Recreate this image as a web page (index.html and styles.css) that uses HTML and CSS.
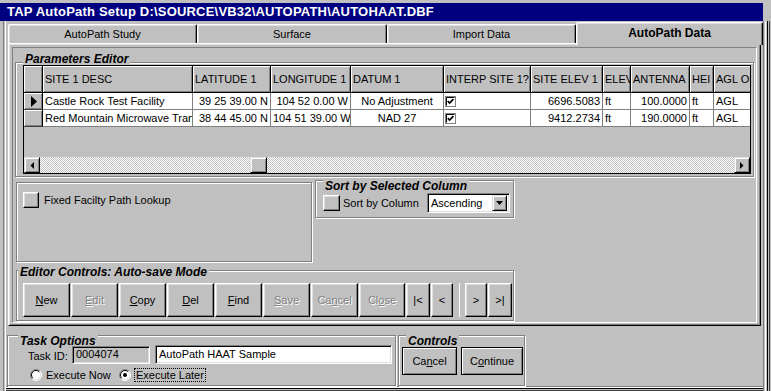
FILE: index.html
```html
<!DOCTYPE html>
<html>
<head>
<meta charset="utf-8">
<title>TAP AutoPath Setup</title>
<link rel="stylesheet" href="styles.css">
</head>
<body>
<div class="win">
  <div class="title">TAP AutoPath Setup D:\SOURCE\VB32\AUTOPATH\AUTOHAAT.DBF</div>
  <div class="client">
    <div class="tabs">
      <div class="tab t1">AutoPath Study</div>
      <div class="tab t2">Surface</div>
      <div class="tab t3">Import Data</div>
      <div class="tab sel">AutoPath Data</div>
    </div>
    <div class="panel">
      <div class="panel-in">
        <div class="group g-params">
          <div class="legend lg-params">Parameters Editor</div>
          <div class="grid">
            <div class="row head">
              <div class="c s"></div>
              <div class="c">SITE 1 DESC</div>
              <div class="c">LATITUDE 1</div>
              <div class="c">LONGITUDE 1</div>
              <div class="c">DATUM 1</div>
              <div class="c">INTERP SITE 1?</div>
              <div class="c">SITE ELEV 1</div>
              <div class="c">ELEV</div>
              <div class="c">ANTENNA</div>
              <div class="c">HEI</div>
              <div class="c">AGL OF</div>
            </div>
            <div class="row data">
              <div class="c s"><svg width="6" height="11" viewBox="0 0 6 11"><path d="M0 0L6 5.5L0 11Z" fill="#000"/></svg></div>
              <div class="c">Castle Rock Test Facility</div>
              <div class="c r">39 25 39.00 N</div>
              <div class="c r">104 52 0.00 W</div>
              <div class="c ctr">No Adjustment</div>
              <div class="c ck"><svg width="11" height="11" viewBox="0 0 11 11"><rect x="0.5" y="0.5" width="10" height="10" fill="#fff" stroke="#808080"/><path d="M1.5 9.5V1.5H9.5" fill="none" stroke="#000"/><path d="M2.8 5.2L4.6 7L8.4 3.2" fill="none" stroke="#000" stroke-width="1.7"/></svg></div>
              <div class="c r">6696.5083</div>
              <div class="c">ft</div>
              <div class="c r">100.0000</div>
              <div class="c">ft</div>
              <div class="c">AGL</div>
            </div>
            <div class="row data">
              <div class="c s"></div>
              <div class="c">Red Mountain Microwave Tran</div>
              <div class="c r">38 44 45.00 N</div>
              <div class="c r">104 51 39.00 W</div>
              <div class="c ctr">NAD 27</div>
              <div class="c ck"><svg width="11" height="11" viewBox="0 0 11 11"><rect x="0.5" y="0.5" width="10" height="10" fill="#fff" stroke="#808080"/><path d="M1.5 9.5V1.5H9.5" fill="none" stroke="#000"/><path d="M2.8 5.2L4.6 7L8.4 3.2" fill="none" stroke="#000" stroke-width="1.7"/></svg></div>
              <div class="c r">9412.2734</div>
              <div class="c">ft</div>
              <div class="c r">190.0000</div>
              <div class="c">ft</div>
              <div class="c">AGL</div>
            </div>
            <div class="empty"></div>
            <div class="hscroll">
              <div class="sbtn"><svg width="4" height="7" viewBox="0 0 4 7"><path d="M4 0V7L0.5 3.5Z" fill="#000"/></svg></div>
              <div class="track"><div class="thumb"></div></div>
              <div class="sbtn"><svg width="4" height="7" viewBox="0 0 4 7"><path d="M0 0V7L3.5 3.5Z" fill="#000"/></svg></div>
            </div>
          </div>
        </div>
        <div class="lower">
          <div class="group g-fixed">
            <div class="chkrow"><span class="sqbtn"></span><span>Fixed Facilty Path Lookup</span></div>
          </div>
          <div class="group g-sort">
            <div class="legend lg-sort">Sort by Selected Column</div>
            <div class="sortrow">
              <span class="sqbtn wide"></span>
              <span class="sortlbl">Sort by Column</span>
              <div class="combo">
                <span class="ctext">Ascending</span>
                <span class="dd"><svg width="7" height="4" viewBox="0 0 7 4"><path d="M0 0H7L3.5 4Z" fill="#000"/></svg></span>
              </div>
            </div>
          </div>
          <div class="group g-editor">
            <div class="legend lg-editor">Editor Controls: Auto-save Mode</div>
            <div class="btnrow">
              <div class="btn w47"><u>N</u>ew</div>
              <div class="btn w47 dis"><u>E</u>dit</div>
              <div class="btn w47"><u>C</u>opy</div>
              <div class="btn w47"><u>D</u>el</div>
              <div class="btn w47"><u>F</u>ind</div>
              <div class="btn w47 dis"><u>S</u>ave</div>
              <div class="btn w47 dis">Ca<u>n</u>cel</div>
              <div class="btn w46 dis">Cl<u>o</u>se</div>
              <div class="btn w24">|&lt;</div>
              <div class="btn w22">&lt;</div>
              <div class="blank"></div>
              <div class="btn w22">&gt;</div>
              <div class="btn w24">&gt;|</div>
            </div>
          </div>
        </div>
      </div>
    </div>
    <div class="bottom">
      <div class="group g-task">
        <div class="legend lg-task">Task Options</div>
        <div class="taskrow">
          <span class="tlabel">Task ID:</span>
          <div class="field f-id">0004074</div>
          <div class="field f-name">AutoPath HAAT Sample</div>
        </div>
        <div class="radiorow">
          <svg class="radio" width="12" height="12" viewBox="0 0 12 12"><circle cx="6" cy="6" r="5" fill="#fff"/><path d="M2.1 9.9A5.5 5.5 0 0 1 9.9 2.1" fill="none" stroke="#808080"/><path d="M9.9 2.1A5.5 5.5 0 0 1 2.1 9.9" fill="none" stroke="#fff"/><path d="M2.8 9.2A4.5 4.5 0 0 1 9.2 2.8" fill="none" stroke="#000"/><path d="M9.2 2.8A4.5 4.5 0 0 1 2.8 9.2" fill="none" stroke="#dfdfdf"/></svg>
          <span class="rlbl1">Execute Now</span>
          <svg class="radio" width="12" height="12" viewBox="0 0 12 12"><circle cx="6" cy="6" r="5" fill="#fff"/><path d="M2.1 9.9A5.5 5.5 0 0 1 9.9 2.1" fill="none" stroke="#808080"/><path d="M9.9 2.1A5.5 5.5 0 0 1 2.1 9.9" fill="none" stroke="#fff"/><path d="M2.8 9.2A4.5 4.5 0 0 1 9.2 2.8" fill="none" stroke="#000"/><path d="M9.2 2.8A4.5 4.5 0 0 1 2.8 9.2" fill="none" stroke="#dfdfdf"/><circle cx="6" cy="6" r="2" fill="#000"/></svg>
          <span class="rlbl2">Execute Later</span>
        </div>
      </div>
      <div class="group g-controls">
        <div class="legend lg-controls">Controls</div>
        <div class="ctlrow">
          <div class="btn def w55">Ca<u>n</u>cel</div>
          <div class="btn def w62">C<u>o</u>ntinue</div>
        </div>
      </div>
    </div>
  </div>
</div>
</body>
</html>
```
FILE: styles.css
```css
* { box-sizing: border-box; }
html, body { margin: 0; padding: 0; }
body {
  width: 771px; height: 391px; overflow: hidden;
  background: #c0c0c0;
  font-family: "Liberation Sans", Arial, sans-serif;
  font-size: 11px; color: #000;
}
.win { height: 391px; padding-top: 3px; background: #c0c0c0; }
.title {
  width: 763px; height: 18px; background: #000080; color: #fff;
  font-weight: bold; font-size: 13px; line-height: 18px; letter-spacing: 0.2px;
  padding-left: 7px; white-space: nowrap; overflow: hidden;
}
.client {
  height: 370px;
  box-shadow:
    inset 3px 0 #c0c0c0, inset 4px 0 #808080, inset 5px 0 #c0c0c0, inset 6px 0 #fff,
    inset -1px 0 #c0c0c0, inset -2px 0 #404040, inset -3px 0 #c0c0c0, inset -4px 0 #000,
    inset -5px 0 #c0c0c0, inset -6px 0 #fff, inset -7px 0 #c0c0c0, inset -8px 0 #808080,
    inset 0 -1px #404040, inset 0 -2px #c0c0c0, inset 0 -3px #000, inset 0 -4px #fff, inset 0 -5px #808080;
}
/* tabs */
.tabs { display: flex; align-items: flex-end; height: 22px; padding-left: 8px; }
.tab {
  height: 19px; border: 1px solid; border-bottom: 0;
  border-color: #fff #000 transparent #fff;
  box-shadow: inset -1px 0 #808080, inset 1px 1px #dfdfdf;
  border-radius: 2px 2px 0 0;
  display: flex; align-items: center; justify-content: center;
  white-space: nowrap;
}
.t1 { width: 189px; }
.t2 { width: 190px; }
.t3 { width: 189px; }
.tab.sel {
  width: 187px; height: 23px; margin-bottom: -2px; padding-bottom: 2px;
  position: relative; z-index: 1; background: #c0c0c0;
  font-weight: bold; font-size: 12px;
}
/* panel */
.panel {
  margin-left: 8px; width: 753px; height: 283px;
  border: 1px solid; border-color: #fff #000 #000 #fff;
  box-shadow: inset 1px 1px #dfdfdf, inset -1px -1px #808080;
  padding: 2px;
}
.panel-in {
  height: 276px; border: 1px solid; border-color: #808080 #fff #fff #808080;
  margin: 1px;
}
/* group boxes */
.group {
  border: 1px solid #808080;
  box-shadow: 1px 1px 0 #fff, inset 1px 1px 0 #fff;
}
.legend {
  width: max-content; height: 14px; line-height: 14px;
  padding: 0 2px; background: #c0c0c0;
  font-weight: bold; font-style: italic; font-size: 12px;
  white-space: nowrap;
}
.g-params { margin: 14px 0 0 2px; width: 739px; height: 115px; }
.lg-params { margin: -11px 0 0 7px; }
/* data grid */
.grid {
  margin: -1px 0 0 7px; width: 728px; height: 109px;
  border: 1px solid #000; background: #c0c0c0; overflow: hidden;
  display: flex; flex-direction: column;
}
.row {
  display: grid; flex: none;
  grid-template-columns: 19px 150px 78px 80px 93px 87px 72px 28px 59px 24px 60px;
}
.row.head { height: 27px; }
.row.data { height: 17px; }
.c {
  border-right: 1px solid #808080; border-bottom: 1px solid #808080;
  white-space: nowrap; overflow: hidden; padding: 0 2px;
  line-height: 16px; background: #fff;
}
.c.r { text-align: right; }
.c.ctr { text-align: center; }
.c.ck { display: flex; align-items: center; padding-left: 1px; }
.head .c {
  background: #c0c0c0; border-right-color: #000; border-bottom-color: #000;
  box-shadow: inset 1px 1px #fff, inset -1px -1px #808080;
  line-height: 26px;
}
.data .c.s {
  background: #c0c0c0; border-right-color: #000; border-bottom-color: #404040;
  box-shadow: inset 1px 1px #fff, inset -1px -1px #808080;
  display: flex; align-items: center; justify-content: center; padding: 0 0 0 1px;
}
.empty { flex: 1; }
.hscroll { height: 16px; flex: none; display: flex; }
.sbtn {
  width: 16px; height: 16px; flex: none;
  border: 1px solid; border-color: #dfdfdf #000 #000 #dfdfdf;
  box-shadow: inset 1px 1px #fff, inset -1px -1px #808080;
  background: #c0c0c0;
  display: flex; align-items: center; justify-content: center;
}
.track {
  flex: 1; display: flex;
  background: repeating-conic-gradient(#c0c0c0 0 25%, #fff 0 50%) 0 0 / 2px 2px;
}
.thumb {
  margin-left: 210px; width: 17px; height: 16px;
  border: 1px solid; border-color: #dfdfdf #000 #000 #dfdfdf;
  box-shadow: inset 1px 1px #fff, inset -1px -1px #808080;
  background: #c0c0c0;
}
/* lower area */
.lower {
  display: grid; grid-template-columns: 296px 199px; column-gap: 3px;
  margin: 5px 0 0 3px; align-items: start;
}
.g-fixed { height: 80px; padding: 9px 0 0 6px; }
.chkrow { display: flex; align-items: center; gap: 5px; height: 16px; }
.sqbtn {
  width: 16px; height: 16px; flex: none; display: block;
  border: 1px solid; border-color: #fff #000 #000 #fff;
  box-shadow: inset -1px -1px #808080, inset 1px 1px #dfdfdf;
}
.sqbtn.wide { width: 17px; }
.g-sort { height: 38px; margin-top: -2px; }
.lg-sort { margin: -2px 0 0 7px; }
.sortrow { display: flex; align-items: center; height: 20px; padding-left: 7px; }
.sortlbl { width: 87px; padding-left: 3px; flex: none; }
.combo {
  width: 83px; height: 20px; flex: none; background: #fff;
  border: 1px solid; border-color: #808080 #fff #fff #808080;
  box-shadow: inset 1px 1px #000, inset -1px -1px #dfdfdf;
  display: flex; align-items: center; padding: 0 2px 0 3px;
}
.ctext { flex: 1; }
.dd {
  width: 15px; height: 16px;
  border: 1px solid; border-color: #dfdfdf #000 #000 #dfdfdf;
  box-shadow: inset 1px 1px #fff, inset -1px -1px #808080;
  background: #c0c0c0;
  display: flex; align-items: center; justify-content: center;
}
.g-editor { grid-column: 1 / 3; height: 51px; margin-top: 8px; }
.lg-editor { margin: -6px 0 4px 1px; }
.btnrow { display: flex; gap: 1px; padding-left: 6px; }
.btn {
  height: 34px; flex: none;
  border: 1px solid; border-color: #fff #000 #000 #fff;
  box-shadow: inset -1px -1px #808080, inset 1px 1px #dfdfdf;
  display: flex; align-items: center; justify-content: center;
  white-space: nowrap;
}
.btn.dis { color: #808080; text-shadow: 1px 1px 0 #fff; }
.w46 { width: 46px; } .w47 { width: 47px; }
.w24 { width: 24px; } .w22 { width: 22px; }
.w55 { width: 55px; } .w62 { width: 62px; }
.blank { width: 10px; height: 34px; flex: none; box-shadow: inset -4px 0 #c0c0c0, inset -5px 0 #fff; }
/* bottom */
.bottom { display: flex; gap: 2px; margin: 9px 0 0 7px; }
.g-task { width: 389px; height: 51px; }
.lg-task { margin: -2px 0 -3px 10px; }
.taskrow { display: flex; align-items: center; height: 19px; padding-left: 20px; }
.tlabel { width: 44px; flex: none; padding-top: 3px; }
.field {
  height: 19px; flex: none;
  border: 1px solid; border-color: #808080 #fff #fff #808080;
  box-shadow: inset 1px 1px #000, inset -1px -1px #dfdfdf;
  padding: 0 3px; line-height: 17px; white-space: nowrap;
}
.f-id { width: 78px; height: 18px; line-height: 15px; }
.f-name { width: 237px; margin-left: 5px; background: #fff; }
.radiorow { display: flex; align-items: center; height: 14px; margin-top: 4px; padding-left: 22px; }
.radio { flex: none; }
.rlbl1 { width: 77px; padding-left: 4px; flex: none; }
.rlbl2 { margin-left: 3px; padding: 0 1px; border: 1px dotted #000; line-height: 12px; }
.g-controls { width: 127px; height: 51px; }
.lg-controls { margin: -2px 0 -1px 7px; }
.ctlrow { display: flex; gap: 4px; padding-left: 3px; }
.btn.def {
  height: 28px; border: 1px solid #000;
  box-shadow: inset 1px 1px #fff, inset -1px -1px #808080;
}
```
